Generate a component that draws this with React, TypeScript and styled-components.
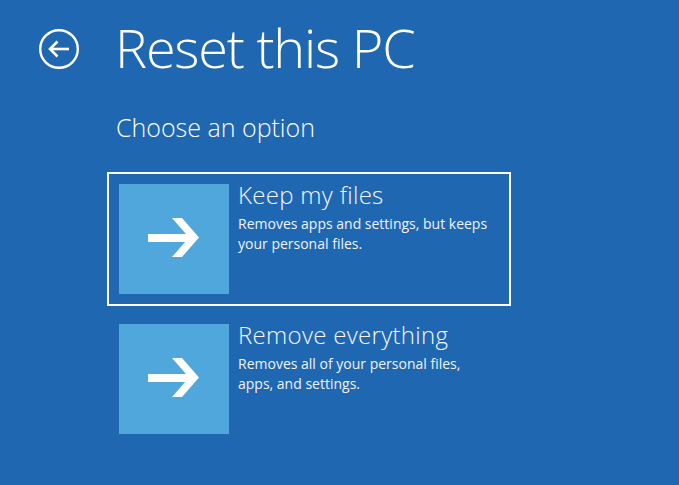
import React from "react";
import styled, { createGlobalStyle } from "styled-components";

const GlobalStyle = createGlobalStyle`
  html, body {
    margin: 0;
    padding: 0;
    background: #2067b2;
    height: 100%;
  }
  body {
    font-family: "Open Sans", "Noto Sans", "Liberation Sans", sans-serif;
    color: #ffffff;
    -webkit-font-smoothing: antialiased;
  }
`;

const Page = styled.div`
  width: 679px;
  height: 485px;
  box-sizing: border-box;
  padding: 19px 0 0 39px;
  background: #2067b2;
  overflow: hidden;
`;

const Header = styled.header`
  display: flex;
  align-items: flex-start;
  gap: 36px;
`;

const BackButton = styled.button`
  width: 40px;
  height: 40px;
  margin-top: 10px;
  padding: 0;
  border: none;
  background: none;
  display: flex;
  cursor: pointer;
`;

const Title = styled.h1`
  margin: 0;
  font-size: 54px;
  line-height: 56px;
  font-weight: 300;
  letter-spacing: -1.2px;
  color: #ffffff;
`;

const Content = styled.main`
  padding-left: 68px;
  display: flex;
  flex-direction: column;
`;

const Subtitle = styled.h2`
  margin: 37px 0 0 9px;
  font-size: 25px;
  line-height: 30px;
  font-weight: 300;
  color: #ffffff;
`;

const OptionList = styled.div`
  margin-top: 30px;
  display: flex;
  flex-direction: column;
  gap: 6px;
`;

const Option = styled.button<{ $selected?: boolean }>`
  width: 404px;
  height: 134px;
  box-sizing: border-box;
  border: 2px solid ${(p) => (p.$selected ? "#ffffff" : "transparent")};
  padding: 10px;
  background: transparent;
  display: flex;
  align-items: flex-start;
  gap: 9px;
  text-align: left;
  color: inherit;
  font-family: inherit;
  cursor: pointer;
`;

const Tile = styled.div`
  width: 110px;
  height: 110px;
  flex: none;
  background: #4fa7dc;
  display: flex;
`;

const OptionText = styled.div`
  display: flex;
  flex-direction: column;
`;

const OptionTitle = styled.div`
  font-size: 24px;
  line-height: 21px;
  font-weight: 300;
  letter-spacing: 0.3px;
  color: #f4f7fb;
`;

const OptionDesc = styled.div`
  margin-top: 9px;
  font-size: 14px;
  line-height: 20px;
  font-weight: 400;
  color: #eef3f9;
  max-width: 250px;
`;

const BackIcon = () => (
  <svg width="40" height="40" viewBox="0 0 40 40">
    <circle cx="20" cy="20" r="18.8" fill="none" stroke="#fff" strokeWidth="2.4" />
    <path d="M11 20 H30" stroke="#fff" strokeWidth="2.6" fill="none" />
    <path d="M18.5 12.5 L11 20 L18.5 27.5" stroke="#fff" strokeWidth="2.6" fill="none" />
  </svg>
);

const ArrowIcon = () => (
  <svg width="110" height="110" viewBox="0 0 110 110">
    <rect x="29" y="50" width="44" height="8" fill="#fff" />
    <polygon points="53,34 63,34 80,53.5 63,73 53,73 70,53.5" fill="#fff" />
  </svg>
);

const options = [
  {
    title: "Keep my files",
    desc: "Removes apps and settings, but keeps your personal files.",
    selected: true,
  },
  {
    title: "Remove everything",
    desc: "Removes all of your personal files, apps, and settings.",
    selected: false,
  },
];

export default function App() {
  return (
    <>
      <GlobalStyle />
      <Page>
        <Header>
          <BackButton aria-label="Back">
            <BackIcon />
          </BackButton>
          <Title>Reset this PC</Title>
        </Header>
        <Content>
          <Subtitle>Choose an option</Subtitle>
          <OptionList>
            {options.map((o) => (
              <Option key={o.title} $selected={o.selected}>
                <Tile>
                  <ArrowIcon />
                </Tile>
                <OptionText>
                  <OptionTitle>{o.title}</OptionTitle>
                  <OptionDesc>{o.desc}</OptionDesc>
                </OptionText>
              </Option>
            ))}
          </OptionList>
        </Content>
      </Page>
    </>
  );
}
